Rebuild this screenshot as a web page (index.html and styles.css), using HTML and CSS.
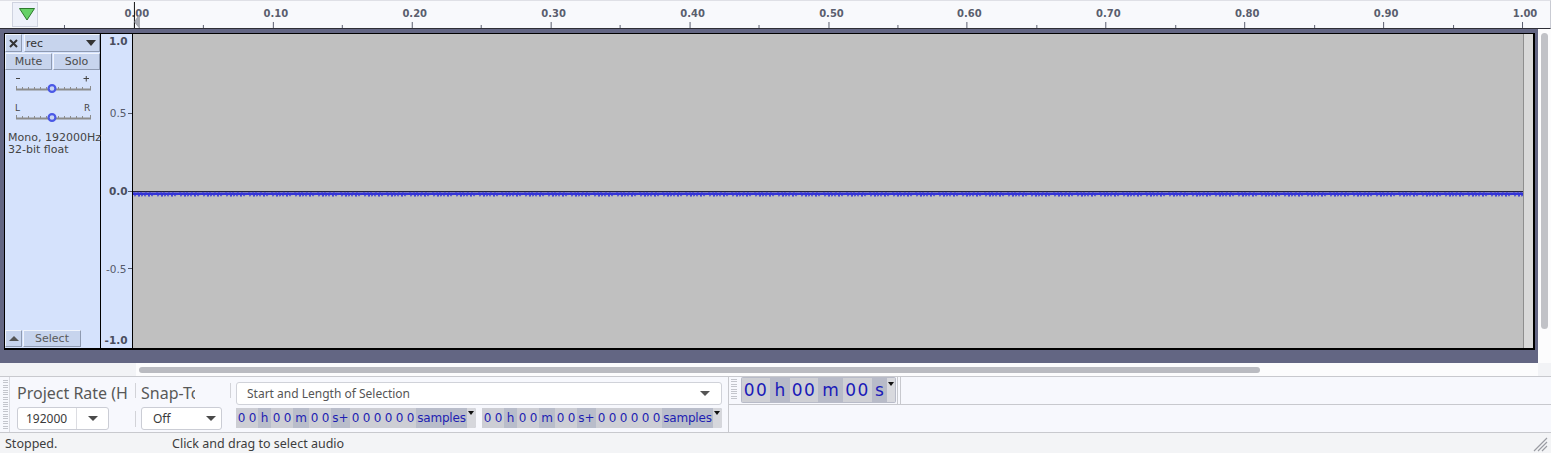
FILE: index.html
```html
<!DOCTYPE html>
<html>
<head>
<meta charset="utf-8">
<link rel="stylesheet" href="styles.css">
</head>
<body>
<div class="ruler">
  <div class="ruler-left">
    <div class="play-btn">
      <svg width="24" height="23" viewBox="0 0 24 23"><polygon points="6.5,5.5 21.5,5.5 14,17" fill="#66d166" stroke="#2c7a2c" stroke-width="1"/></svg>
    </div>
  </div>
  <svg class="ruler-svg" width="1513" height="27" viewBox="0 0 1513 27">
    <path d="M96.5 21V27M235.5 21V27M374.5 21V27M513.5 21V27M652.5 21V27M791.5 21V27M929.5 21V27M1068.5 21V27M1207.5 21V27M1346.5 21V27M1485.5 21V27" stroke="#5a5e6e" stroke-width="1"/>
    <path d="M26.5 24V27M165.5 24V27M304.5 24V27M443.5 24V27M582.5 24V27M721.5 24V27M860.5 24V27M999.5 24V27M1138.5 24V27M1277.5 24V27M1416.5 24V27" stroke="#5a5e6e" stroke-width="1"/>
    <g class="rlab" text-anchor="middle">
      <text x="99" y="16">0.00</text>
      <text x="238" y="16">0.10</text>
      <text x="377" y="16">0.20</text>
      <text x="516" y="16">0.30</text>
      <text x="655" y="16">0.40</text>
      <text x="794" y="16">0.50</text>
      <text x="932" y="16">0.60</text>
      <text x="1071" y="16">0.70</text>
      <text x="1210" y="16">0.80</text>
      <text x="1349" y="16">0.90</text>
      <text x="1488" y="16">1.00</text>
    </g>
    <line x1="96.5" y1="1" x2="96.5" y2="27" stroke="#111" stroke-width="1"/>
    <polygon points="101.5,13.5 101.5,27 96.5,21" fill="#a9abb3" stroke="#8a8c94" stroke-width="0.6"/>
  </svg>
</div>

<div class="main">
  <div class="track-area">
    <div class="track">
      <div class="tpanel">
        <div class="trow1">
          <div class="tbtn close">
            <svg width="9" height="9" viewBox="0 0 9 9"><path d="M1 1L8 8M8 1L1 8" stroke="#333" stroke-width="2"/></svg>
          </div>
          <div class="tbtn name"><span>rec</span><i class="name-arr"></i></div>
        </div>
        <div class="trow2">
          <div class="tbtn ms">Mute</div>
          <div class="tbtn ms">Solo</div>
        </div>
        <svg class="sliders" width="95" height="62" viewBox="0 0 95 62">
          <path d="M11 8.5H15" stroke="#444" stroke-width="1"/>
          <path d="M78.5 8.5H84M81.25 6V11.5" stroke="#444" stroke-width="1"/>
          <path d="M11 19.5H86" stroke="#8c8c8c" stroke-width="2"/>
          <path d="M11.5 16V19M17.5 17V19M23.5 17V19M29.5 17V19M35.5 17V19M41.5 17V19M53.5 17V19M59.5 17V19M65.5 17V19M71.5 17V19M77.5 17V19M85.5 16V19" stroke="#8c8c8c" stroke-width="1"/>
          <circle cx="47" cy="18.5" r="3.4" fill="#c8d5f2" stroke="#4a58e6" stroke-width="2.2"/>
          <text x="10" y="41" class="lr">L</text>
          <text x="79" y="41" class="lr">R</text>
          <path d="M11 48.5H86" stroke="#8c8c8c" stroke-width="2"/>
          <path d="M11.5 45V48M17.5 46V48M23.5 46V48M29.5 46V48M35.5 46V48M41.5 46V48M53.5 46V48M59.5 46V48M65.5 46V48M71.5 46V48M77.5 46V48M85.5 45V48" stroke="#8c8c8c" stroke-width="1"/>
          <circle cx="47" cy="47.5" r="3.4" fill="#c8d5f2" stroke="#4a58e6" stroke-width="2.2"/>
        </svg>
        <div class="tinfo">Mono, 192000Hz<br>32-bit float</div>
        <div class="tspacer"></div>
        <div class="trow3">
          <div class="tbtn up"><i class="up-arr"></i></div>
          <div class="tbtn selbtn">Select</div>
        </div>
      </div>
      <div class="vruler">
        <svg width="31" height="314" viewBox="0 0 31 314">
          <text x="26.5" y="11" class="vb" text-anchor="end">1.0</text>
          <text x="25.5" y="83" class="vn" text-anchor="end">0.5</text>
          <path d="M27 79.5H31" stroke="#555a6a"/>
          <text x="26.5" y="161" class="vb" text-anchor="end">0.0</text>
          <path d="M27 157.5H31" stroke="#555a6a"/>
          <text x="25.5" y="239" class="vn" text-anchor="end">-0.5</text>
          <path d="M27 234.5H31" stroke="#555a6a"/>
          <text x="26.5" y="310" class="vb" text-anchor="end">-1.0</text>
        </svg>
      </div>
      <div class="wave">
        <svg width="1390" height="314" viewBox="0 0 1390 314">
          <defs>
            <pattern id="noise" x="0" y="157" width="23" height="6" patternUnits="userSpaceOnUse">
              <path d="M0 3L1 2L2 4.5L3 2.5L4 3.5L5 2L6 5L7 3L8 2L9 4.5L10 3L11 2.5L12 4.5L13 2L14 3.5L15 3L16 5L17 2L18 3L19 4.5L20 2.5L21 3.5L23 3" stroke="#3434d8" fill="none" stroke-width="1.3"/>
            </pattern>
          </defs>
          <line x1="0" y1="157.5" x2="1390" y2="157.5" stroke="#24243c" stroke-width="1"/>
          <rect x="0" y="158.5" width="1390" height="2.5" fill="#3030cc"/>
          <rect x="0" y="157" width="1390" height="6" fill="url(#noise)"/>
        </svg>
      </div>
      <div class="wave-end"></div>
    </div>
  </div>
  <div class="vscroll"><div class="vthumb"></div></div>
</div>

<div class="hscroll">
  <div class="hs-left"></div>
  <div class="hs-track"><div class="hthumb"></div></div>
  <div class="hs-corner"></div>
</div>

<div class="toolbar">
  <div class="grip"></div>
  <div class="rate">
    <div class="tb-label rate-label">Project Rate (Hz)</div>
    <div class="combo rate-combo"><span class="val">192000</span><span class="arr"><i class="tri"></i></span></div>
  </div>
  <div class="sep"></div>
  <div class="snap">
    <div class="tb-label snap-label">Snap-To</div>
    <div class="combo snap-combo"><span class="val">Off</span><span class="arr"><i class="tri"></i></span></div>
  </div>
  <div class="sep sep-top"></div>
  <div class="sel">
    <div class="dd"><span>Start and Length of Selection</span><i class="tri"></i></div>
    <div class="tfields">
      <div class="tf">
        <span class="dg w22"><b>0</b><b>0</b></span><span class="u w13">h</span>
        <span class="dg w22"><b>0</b><b>0</b></span><span class="u w16">m</span>
        <span class="dg w22"><b>0</b><b>0</b></span><span class="u w19">s+</span>
        <span class="dg w66"><b>0</b><b>0</b><b>0</b><b>0</b><b>0</b><b>0</b></span><span class="u w51">samples</span>
        <span class="tarr"></span>
      </div>
      <div class="tf">
        <span class="dg w22"><b>0</b><b>0</b></span><span class="u w13">h</span>
        <span class="dg w22"><b>0</b><b>0</b></span><span class="u w16">m</span>
        <span class="dg w22"><b>0</b><b>0</b></span><span class="u w19">s+</span>
        <span class="dg w66"><b>0</b><b>0</b><b>0</b><b>0</b><b>0</b><b>0</b></span><span class="u w51">samples</span>
        <span class="tarr"></span>
      </div>
    </div>
  </div>
  <div class="right">
    <div class="right-top">
      <div class="grip2"></div>
      <div class="bigtime">
        <span class="bdg w28">00</span><span class="bu w20">h</span>
        <span class="bdg w28">00</span><span class="bu w25">m</span>
        <span class="bdg w29">00</span><span class="bu w15">s</span>
        <span class="barr"></span>
      </div>
      <div class="ttb-end"></div>
    </div>
    <div class="right-bottom"></div>
  </div>
</div>

<div class="status">
  <span class="st1">Stopped.</span>
  <span class="st2">Click and drag to select audio</span>
  <svg class="resize" width="16" height="16" viewBox="0 0 16 16">
    <path d="M2 15L15 2M6 15L15 6M10 15L15 10" stroke="#9a9ca3" stroke-width="1.2"/>
  </svg>
</div>
</body>
</html>
```

FILE: styles.css
```css
* { box-sizing: border-box; }

body {
  margin: 0;
  width: 1551px;
  height: 453px;
  overflow: hidden;
  background: #f4f5f8;
  font-family: "Noto Sans", "DejaVu Sans", sans-serif;
}

/* ---------- ruler ---------- */
.ruler {
  display: flex;
  height: 29px;
  background: #f8f9fc;
  border-top: 1px solid #dfe0e6;
  border-bottom: 1px solid #2e2e36;
  border-right: 1px solid #c9cbd3;
}
.ruler-left {
  width: 38px;
  padding-left: 12px;
  padding-top: 1px;
}
.play-btn {
  width: 26px;
  height: 25px;
  background: #eef1fa;
  border: 1px solid #cfd3e0;
}
.play-btn svg { display: block; }
.ruler-svg { display: block; }
.rlab text {
  font-family: "DejaVu Sans", sans-serif;
  font-weight: bold;
  font-size: 10px;
  fill: #5a5e6e;
}

/* ---------- main track area ---------- */
.main {
  display: flex;
  height: 334px;
}
.track-area {
  width: 1538px;
  background: #636683;
  padding: 4px 0 0 4px;
}
.track {
  display: flex;
  width: 1531px;
  height: 317px;
  border: 1px solid #000;
  border-right-width: 2px;
  border-bottom-width: 2px;
}
.tpanel {
  width: 96px;
  background: #d5e2fc;
  border-right: 1px solid #000;
  display: flex;
  flex-direction: column;
  font-family: "DejaVu Sans", sans-serif;
  font-size: 11px;
  color: #333;
}
.tbtn {
  background: #c7d4ed;
  border: 1px solid;
  border-color: #f0f4fc #8e9ab1 #8e9ab1 #f0f4fc;
}
.trow1 {
  display: flex;
  height: 18px;
}
.close {
  width: 17px;
  margin-right: 2px;
  display: flex;
  align-items: center;
  justify-content: center;
}
.close svg { display: block; }
.name {
  width: 76px;
  display: flex;
  align-items: center;
  justify-content: space-between;
  padding: 0 3px 0 1px;
}
.name-arr {
  width: 0;
  height: 0;
  border-left: 5px solid transparent;
  border-right: 5px solid transparent;
  border-top: 6px solid #333;
}
.trow2 {
  display: flex;
  height: 17px;
  margin-top: 1px;
  gap: 1px;
}
.ms {
  width: 47px;
  text-align: center;
  line-height: 16px;
  color: #4a4a4a;
}
.sliders { display: block; }
.lr {
  font-family: "DejaVu Sans", sans-serif;
  font-size: 9px;
  fill: #444;
}
.tinfo {
  padding-left: 3px;
  line-height: 12px;
  color: #444;
  white-space: nowrap;
}
.tspacer { flex: 1; }
.trow3 {
  display: flex;
  height: 17px;
  margin-bottom: 1px;
  gap: 1px;
}
.up {
  width: 17px;
  display: flex;
  align-items: center;
  justify-content: center;
}
.up-arr {
  width: 0;
  height: 0;
  border-left: 5px solid transparent;
  border-right: 5px solid transparent;
  border-bottom: 5px solid #555;
}
.selbtn {
  width: 58px;
  text-align: center;
  line-height: 15px;
  color: #5a5a5a;
}

.vruler {
  width: 32px;
  background: #d5e2fc;
  border-right: 1px solid #000;
}
.vruler svg { display: block; }
.vb {
  font-family: "DejaVu Sans", sans-serif;
  font-weight: bold;
  font-size: 10.5px;
  fill: #4a4e5e;
}
.vn {
  font-family: "DejaVu Sans", sans-serif;
  font-size: 10.5px;
  fill: #555a6a;
}
.wave {
  width: 1390px;
  background: #c0c0c0;
}
.wave svg { display: block; }
.wave-end {
  width: 10px;
  background: #d9d9d9;
  border-left: 1px solid #8e8e8e;
}

.vscroll {
  width: 13px;
  background: #fcfcfd;
  padding: 4px 3px 0 3px;
}
.vthumb {
  width: 7px;
  height: 296px;
  border-radius: 4px;
  background: #c1c2c7;
}

/* ---------- horizontal scroll ---------- */
.hscroll {
  display: flex;
  height: 13px;
}
.hs-left { width: 136px; background: #f2f3f6; }
.hs-track {
  flex: 1;
  background: #fcfcfd;
  padding: 4px 0 0 3px;
}
.hthumb {
  width: 1121px;
  height: 6px;
  border-radius: 3px;
  background: #babbc1;
}
.hs-corner { width: 13px; background: #f2f3f6; }

/* ---------- toolbar ---------- */
.toolbar {
  display: flex;
  height: 57px;
  background: #f7f8fd;
  border-top: 1px solid #c8c9ce;
  border-bottom: 1px solid #c8c9ce;
}
.grip {
  width: 10px;
  border-right: 1px solid #d9dae0;
  background: repeating-linear-gradient(to bottom, #c3c5cc 0 1px, transparent 1px 2.4px) 3px 3px / 5px 50px no-repeat;
}
.tb-label {
  height: 27px;
  line-height: 32px;
  font-size: 16px;
  color: #585858;
  white-space: nowrap;
  overflow: hidden;
}
.rate {
  width: 125px;
  padding-left: 7px;
  display: flex;
  flex-direction: column;
}
.rate-label { width: 111px; }
.snap {
  width: 94px;
  padding-left: 5px;
  display: flex;
  flex-direction: column;
}
.snap-label { width: 54px; }
.combo {
  margin-top: 3px;
  height: 23px;
  background: #fff;
  border: 1px solid #cbcdd5;
  border-radius: 3px;
  display: flex;
  font-size: 12px;
  color: #3a3a3a;
  line-height: 21px;
}
.rate-combo { width: 92px; }
.rate-combo .val {
  width: 59px;
  padding-left: 8px;
  border-right: 1px solid #dcdde2;
}
.snap-combo { width: 81px; }
.snap-combo .val {
  width: 58px;
  padding-left: 11px;
}
.combo .arr {
  flex: 1;
  display: flex;
  align-items: center;
  justify-content: center;
}
.tri {
  width: 0;
  height: 0;
  border-left: 5px solid transparent;
  border-right: 5px solid transparent;
  border-top: 5px solid #4a4a4a;
}
.sep {
  width: 1px;
  background: linear-gradient(to bottom, transparent 6px, #d2d3d8 6px 21px, transparent 21px 34px, #d2d3d8 34px 50px, transparent 50px);
}
.sep-top {
  background: linear-gradient(to bottom, transparent 6px, #d2d3d8 6px 21px, transparent 21px);
}
.sel {
  width: 498px;
  padding-left: 5px;
  border-right: 1px solid #c8c9ce;
}
.dd {
  margin-top: 5px;
  width: 486px;
  height: 23px;
  background: #fff;
  border: 1px solid #d0d2d9;
  border-radius: 3px;
  display: flex;
  align-items: center;
  justify-content: space-between;
  padding: 0 11px 0 10px;
  font-size: 12px;
  color: #555;
}
.dd .tri { border-top-color: #555; }
.tfields {
  display: flex;
  gap: 6px;
  margin-top: 3px;
}
.tf {
  display: flex;
  width: 240px;
  height: 20px;
  background: #b9bdca;
  border-radius: 2px;
  font-family: "DejaVu Sans", sans-serif;
  font-size: 12px;
  line-height: 20px;
  color: #1e1eb2;
  white-space: nowrap;
}
.dg {
  display: flex;
  background: #cdced4;
}
.dg b {
  font-weight: normal;
  width: 11px;
  text-align: center;
}
.u { text-align: center; }
.w51 { letter-spacing: -0.2px; }
.w13 { width: 13px; }
.w15 { width: 15px; }
.w16 { width: 16px; }
.w19 { width: 19px; }
.w20 { width: 20px; }
.w22 { width: 22px; }
.w25 { width: 25px; }
.w28 { width: 28px; }
.w29 { width: 29px; }
.w51 { width: 51px; }
.w66 { width: 66px; }
.tarr {
  width: 9px;
  background: #d6d7dc;
  position: relative;
  border-radius: 0 2px 2px 0;
}
.tarr::after {
  content: "";
  position: absolute;
  left: 1px;
  top: 3px;
  border-left: 3.5px solid transparent;
  border-right: 3.5px solid transparent;
  border-top: 4px solid #111;
}
.right {
  flex: 1;
  display: flex;
  flex-direction: column;
}
.right-top {
  height: 28px;
  display: flex;
  border-bottom: 1px solid #c8c9ce;
  padding-left: 2px;
}
.grip2 {
  width: 6px;
  margin-top: 2px;
  height: 22px;
  background: repeating-linear-gradient(to bottom, #c3c5cc 0 1px, transparent 1px 2.4px);
}
.bigtime {
  margin-left: 4px;
  width: 155px;
  height: 26px;
  display: flex;
  background: #b8bbc8;
  border-radius: 2px;
  font-family: "DejaVu Sans", sans-serif;
  font-size: 17px;
  line-height: 26px;
  color: #1a1ab8;
  padding-left: 1px;
}
.bdg {
  background: #cfd0d5;
  text-align: center;
  letter-spacing: 1.5px;
  margin: 1px 0;
  line-height: 24px;
}
.bu { text-align: center; }
.barr {
  width: 8px;
  background: #d8d9de;
  position: relative;
  margin: 1px 0;
}
.barr::after {
  content: "";
  position: absolute;
  left: 0.5px;
  top: 4px;
  border-left: 3.5px solid transparent;
  border-right: 3.5px solid transparent;
  border-top: 4px solid #111;
}
.ttb-end {
  width: 4px;
  margin-left: 1px;
  border-left: 1px solid #c8c9ce;
  border-right: 1px solid #c8c9ce;
}
.right-bottom { flex: 1; }

/* ---------- status ---------- */
.status {
  height: 20px;
  display: flex;
  align-items: center;
  padding-left: 5px;
  padding-top: 1px;
  background: #f3f4f6;
  font-size: 12.5px;
  color: #3d3d3d;
}
.st1 { width: 167px; }
.resize {
  margin-left: auto;
  margin-right: 3px;
  display: block;
}
```
